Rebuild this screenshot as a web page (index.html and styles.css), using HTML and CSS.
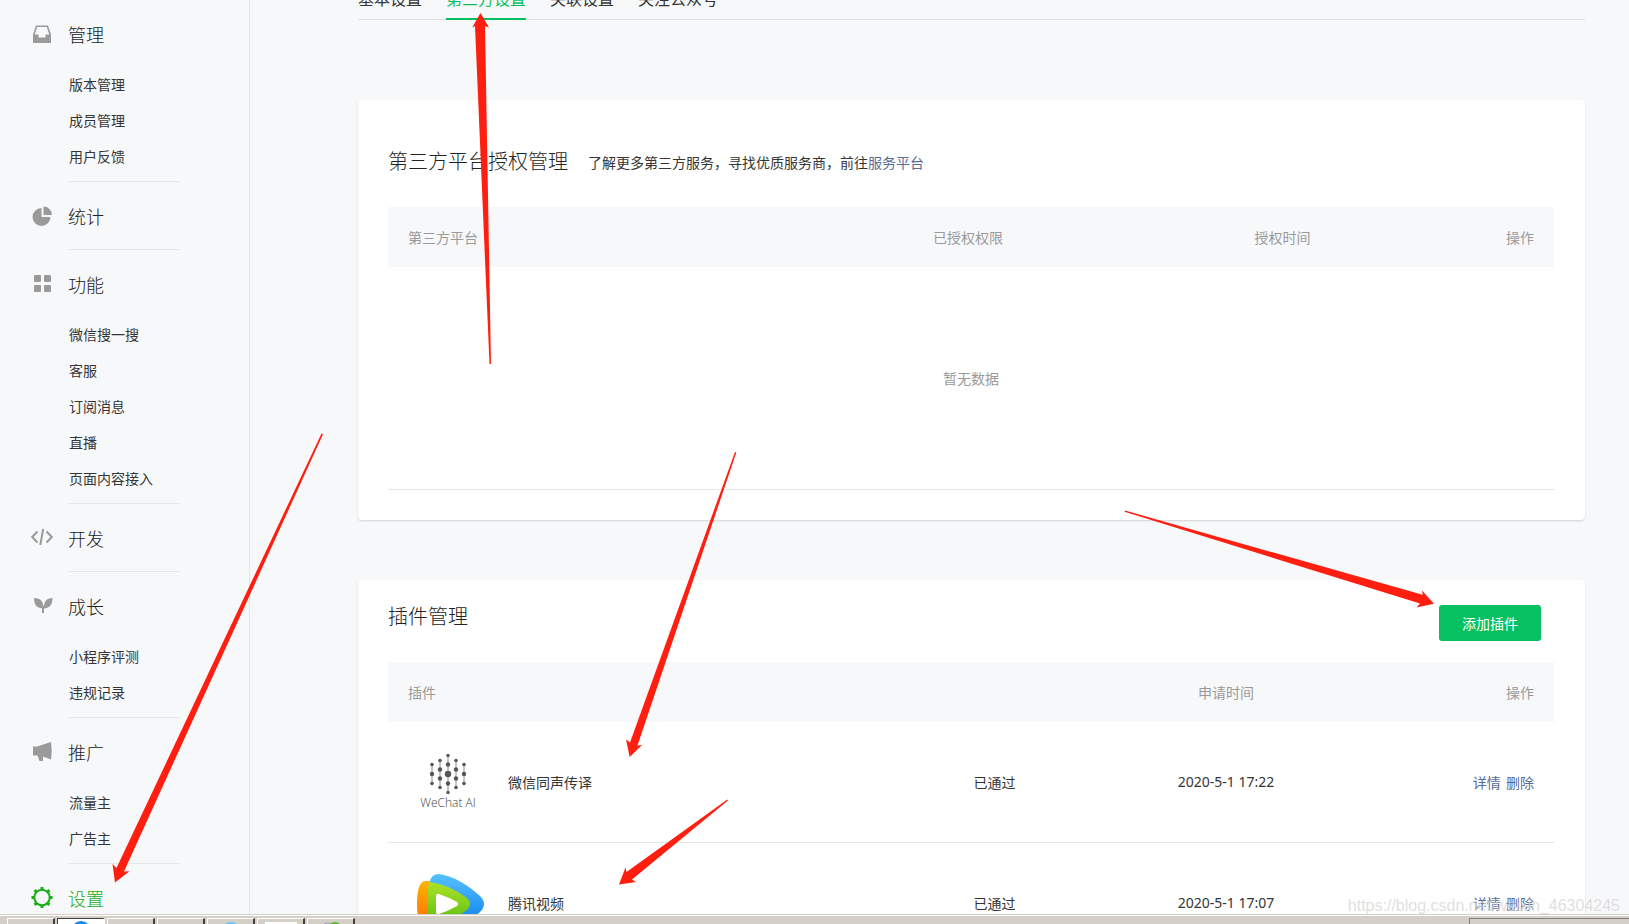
FILE: index.html
```html
<!DOCTYPE html>
<html lang="zh-CN">
<head>
<meta charset="utf-8">
<title>第三方设置</title>
<link rel="stylesheet" href="styles.css">
</head>
<body>
<div class="page">
  <nav class="sidebar">
    <section class="group">
      <h2 class="group-title"><svg class="icon" viewBox="0 0 22 22"><path fill="#9a9a9a" fill-rule="evenodd" d="M5 2.500h12l3 9V20H2v-8.500zM6.200 4 3.800 11.500H7.500v3h7v-3h3.700L15.800 4z"/></svg>管理</h2>
      <ul class="submenu">
        <li><a href="#">版本管理</a></li>
        <li><a href="#">成员管理</a></li>
        <li><a href="#">用户反馈</a></li>
      </ul>
    </section>
    <section class="group">
      <h2 class="group-title"><svg class="icon" viewBox="0 0 22 22"><path fill="#9a9a9a" d="M10.500 3v9h9A9 9 0 1 1 10.500 3z"/><path fill="#9a9a9a" d="M12.500 1.500A8.500 8.500 0 0 1 21 10h-8.500z"/></svg>统计</h2>
    </section>
    <section class="group">
      <h2 class="group-title"><svg class="icon" viewBox="0 0 22 22"><g fill="#9a9a9a"><rect x="3" y="2" width="7" height="7" rx="1"/><rect x="13" y="2" width="7" height="7" rx="1"/><rect x="3" y="12" width="7" height="7" rx="1"/><rect x="13" y="12" width="7" height="7" rx="1"/></g></svg>功能</h2>
      <ul class="submenu">
        <li><a href="#">微信搜一搜</a></li>
        <li><a href="#">客服</a></li>
        <li><a href="#">订阅消息</a></li>
        <li><a href="#">直播</a></li>
        <li><a href="#">页面内容接入</a></li>
      </ul>
    </section>
    <section class="group">
      <h2 class="group-title"><svg class="icon" viewBox="0 0 22 22"><path fill="none" stroke="#9a9a9a" stroke-width="2" d="M6.500 4.500 1.200 10l5.300 5.500M15.500 4.500l5.300 5.500-5.300 5.500M12.200 2 9.300 18"/></svg>开发</h2>
    </section>
    <section class="group">
      <h2 class="group-title"><svg class="icon" viewBox="0 0 22 22"><g fill="#9a9a9a"><path d="M3 3c7 0 9.500 4 9.500 10.500C6 13.500 3 10 3 3zM21.500 3c-6 0-9 4-8.500 10.500 6-.5 8.500-4 8.500-10.500z"/><path d="M11 11h2v7h-2z"/></g></svg>成长</h2>
      <ul class="submenu">
        <li><a href="#">小程序评测</a></li>
        <li><a href="#">违规记录</a></li>
      </ul>
    </section>
    <section class="group">
      <h2 class="group-title"><svg class="icon" viewBox="0 0 22 22"><path fill="#9a9a9a" d="M2 5.500h4L20 1q1.500 8.500 0 17.500l-8-3v4.500H8.500l-2-5.500H2z"/></svg>推广</h2>
      <ul class="submenu">
        <li><a href="#">流量主</a></li>
        <li><a href="#">广告主</a></li>
      </ul>
    </section>
    <section class="group">
      <h2 class="group-title active"><svg class="icon" viewBox="0 0 22 22"><g fill="none" stroke="#1aad19"><circle cx="11" cy="10.500" r="7.700" stroke-width="2"/><path stroke-width="3" d="M11 0v3M11 18v3M.5 10.500h3M18.500 10.500h3M3.600 3.100l2 2M16.400 15.900l2 2M3.600 17.900l2-2M16.400 5.100l2-2"/></g></svg>设置</h2>
    </section>
  </nav>

  <main class="content">
    <div class="tabs">
      <a class="tab" href="#">基本设置</a>
      <a class="tab selected" href="#">第三方设置</a>
      <a class="tab" href="#">关联设置</a>
      <a class="tab" href="#">关注公众号</a>
    </div>

    <section class="card auth">
      <header class="card-head">
        <h3>第三方平台授权管理</h3>
        <p>了解更多第三方服务，寻找优质服务商，前往<a href="#">服务平台</a></p>
      </header>
      <table>
        <colgroup><col><col class="scope"><col class="granted"><col class="act"></colgroup>
        <thead><tr><th class="left">第三方平台</th><th>已授权权限</th><th>授权时间</th><th class="right">操作</th></tr></thead>
        <tbody><tr><td class="empty" colspan="4">暂无数据</td></tr></tbody>
      </table>
    </section>

    <section class="card plugins">
      <header class="card-head">
        <h3>插件管理</h3>
        <button type="button" class="add">添加插件</button>
      </header>
      <table>
        <colgroup><col><col class="state"><col class="applied"><col class="links"></colgroup>
        <thead><tr><th class="left">插件</th><th></th><th>申请时间</th><th class="right">操作</th></tr></thead>
        <tbody>
          <tr>
            <td class="left"><div class="plugin">
              <svg class="logo" viewBox="0 0 80 80">
                <path stroke="#8a8a8a" stroke-width="1" d="M24 22v20M32 18v28M40 12v38M48 18v28M56 22v20"/>
                <g fill="#555">
                  <circle cx="24" cy="22.500" r="1.800"/><circle cx="24" cy="32" r="2.200"/><circle cx="24" cy="41.500" r="1.800"/>
                  <circle cx="32" cy="18.500" r="1.800"/><circle cx="32" cy="27.500" r="2.200"/><circle cx="32" cy="36.500" r="2.200"/><circle cx="32" cy="45.500" r="1.800"/>
                  <circle cx="40" cy="13.500" r="1.700"/><circle cx="40" cy="22.500" r="2.200"/><circle cx="40" cy="32" r="3.200"/><circle cx="40" cy="41.500" r="2.200"/><circle cx="40" cy="50.500" r="1.700"/>
                  <circle cx="48" cy="18.500" r="1.800"/><circle cx="48" cy="27.500" r="2.200"/><circle cx="48" cy="36.500" r="2.200"/><circle cx="48" cy="45.500" r="1.800"/>
                  <circle cx="56" cy="22.500" r="1.800"/><circle cx="56" cy="32" r="2.200"/><circle cx="56" cy="41.500" r="1.800"/>
                </g>
                <text class="logo-text" x="40" y="65" text-anchor="middle">WeChat AI</text>
              </svg>
              <span>微信同声传译</span></div></td>
            <td>已通过</td><td class="date">2020-5-1 17:22</td>
            <td class="right"><a href="#">详情</a> <a href="#">删除</a></td>
          </tr>
          <tr>
            <td class="left"><div class="plugin">
              <svg class="logo" viewBox="0 0 80 80">
                <defs>
                  <linearGradient id="blue" x2="0" y2="1"><stop offset="0" stop-color="#55c1ff"/><stop offset=".6" stop-color="#2492f5"/><stop offset="1" stop-color="#1c86f0"/></linearGradient>
                  <linearGradient id="orange" x2="0" y2="1"><stop offset="0" stop-color="#ffb400"/><stop offset="1" stop-color="#ff6a00"/></linearGradient>
                  <linearGradient id="green" x2="0" y2="1"><stop offset="0" stop-color="#aee226"/><stop offset="1" stop-color="#55bb10"/></linearGradient>
                </defs>
                <path fill="url(#blue)" d="M22 19q1-8 9-8 20 3 41 22 8 8 0 16-21 19-41 22-8 0-9-8z"/>
                <path fill="url(#orange)" d="M22 18h-5Q9 19 9 41t8 23h5z"/>
                <path fill="url(#green)" d="M21 19q19 2 38 16 6 6 0 12-19 14-38 16-4-22 0-44z"/>
                <path fill="#fff" d="M28 33q0-3 3-2 9 3 18 8 2 2 0 4-9 5-18 8-3 1-3-2z"/>
              </svg>
              <span>腾讯视频</span></div></td>
            <td>已通过</td><td class="date">2020-5-1 17:07</td>
            <td class="right"><a href="#">详情</a> <a href="#">删除</a></td>
          </tr>
        </tbody>
      </table>
    </section>
  </main>
</div>

<footer class="taskbar">
  <span class="task"></span>
  <span class="task pressed"><svg width="20" height="20"><circle cx="10" cy="11" r="10" fill="#1e88e5"/></svg></span>
  <span class="task"></span>
  <span class="task"><svg width="24" height="20"><path fill="#2f7fe0" d="M0 4h24v16H0z"/></svg></span>
  <span class="task"><svg width="20" height="20"><ellipse cx="10" cy="11" rx="9" ry="9" fill="#5cc8fa"/></svg></span>
  <span class="task"><svg width="32" height="20"><path fill="#fff" d="M0 2h32v18H0z"/></svg></span>
  <span class="task"><svg width="24" height="20"><ellipse cx="9" cy="10" rx="8" ry="7" fill="#eee" stroke="#999"/><ellipse cx="16" cy="8" rx="7" ry="6" fill="#5ab82e"/></svg></span>
  <span class="tray"></span>
</footer>

<div class="watermark">https://blog.csdn.net/weixin_46304245</div>
<svg class="arrows" width="1629" height="924" viewBox="0 0 1629 924" fill="#ff1f10" aria-hidden="true">
  <path d="M480.500 13 489 27.500 485 26 491 364h-1.500L475 26l-2.800 1.500z"/>
  <path d="M115 882.500 112.500 864l4 4L321.500 433.500l1.500.7L124 871.500l5.500-.3z"/>
  <path d="M629.700 757 626 739.500l4 3L735 452l1.300.5L637.500 745.500l4.500-.5z"/>
  <path d="M619 884.500 625.500 867.500l1 4.500L727.300 799.500l.7 1L632 879.500l4 2.500z"/>
  <path d="M1434 603.700 1422 590.500l.7 4.300L1125 510.500l-.4 1.200L1420 603.500l-3.500 4z"/>
</svg>
</body>
</html>
```
FILE: styles.css
```css
* { box-sizing: border-box; }
body {
  margin: 0;
  height: 100vh;
  overflow: hidden;
  display: flex;
  flex-direction: column;
  position: relative;
  background: #f7f8fa;
  color: #353535;
  font: 14px/20px "Noto Sans CJK SC", sans-serif;
}
h2, h3, p, ul { margin: 0; padding: 0; }
ul { list-style: none; }
a { color: #576b95; text-decoration: none; }

.page { flex: 1; min-height: 0; display: flex; overflow: hidden; }

.sidebar { flex: none; width: 250px; border-right: 1px solid #e4e5e7; }
.group { padding-top: 20px; margin-left: 69px; width: 110px; border-bottom: 1px solid #e4e5e7; }
.group-title {
  display: flex;
  align-items: center;
  height: 28px;
  margin: 0 0 19px -38px;
  font-size: 18px;
  font-weight: 300;
  line-height: 28px;
  color: #222;
}
.group-title.active { color: #1aad19; }
.icon { flex: none; width: 22px; height: 22px; margin-right: 15px; }
.submenu { padding-bottom: 6px; }
.submenu a { display: block; height: 36px; color: inherit; line-height: 34px; white-space: nowrap; }

.content { flex: 1; min-width: 0; padding: 0 44px 0 108px; }
.tabs {
  display: flex;
  align-items: flex-end;
  gap: 24px;
  height: 20px;
  box-shadow: inset 0 -1px #dfe0e2;
}
.tab {
  color: inherit;
  font-size: 16px;
  line-height: 24px;
  padding-bottom: 8px;
  border-bottom: 2px solid transparent;
}
.tab.selected { color: #07c160; border-color: #07c160; }

.card {
  background: #fff;
  border-radius: 4px;
  padding: 0 31px 30px 30px;
  box-shadow: 0 1px 2px rgba(0, 0, 0, .15);
}
.card-head { display: flex; align-items: center; }
.card h3 { font-size: 20px; font-weight: 300; line-height: 28px; color: #222; }
.auth { margin-top: 80px; }
.auth .card-head { height: 107px; padding-top: 16px; gap: 20px; }
.auth h3 { padding-bottom: 2px; }
.plugins { margin-top: 60px; }
.plugins .card-head { height: 82px; padding: 4px 13px 0 0; justify-content: space-between; }
.plugins h3 { padding-bottom: 14px; }
.add {
  width: 102px;
  height: 36px;
  padding: 0;
  border: 0;
  border-radius: 3px;
  background: #07c160;
  color: #fff;
  font: inherit;
}

table { width: 100%; table-layout: fixed; border-collapse: separate; border-spacing: 0; }
th { height: 60px; padding: 0; background: #f7f8fa; color: #9a9a9a; font-weight: 400; }
td { padding: 20px 0; text-align: center; border-bottom: 1px solid #e4e5e7; }
.left { padding-left: 20px; text-align: left; }
.right { padding-right: 20px; text-align: right; }
.right a + a { margin-left: 2px; }
.scope { width: 346px; }
.granted { width: 283px; }
.act { width: 130px; }
.state { width: 231px; }
.applied { width: 232px; }
.links { width: 212px; }
.empty { height: 223px; color: #9a9a9a; }
.date { font-family: "Noto Sans", sans-serif; }
.plugin { display: flex; align-items: center; gap: 20px; }
.logo { flex: none; width: 80px; height: 80px; }
.logo-text { font: 300 12px "Open Sans", sans-serif; fill: #444; }

.taskbar {
  flex: none;
  display: flex;
  gap: 2px;
  height: 10px;
  padding: 3px 0 0 7px;
  overflow: hidden;
  background: #d4d0c8;
  border-top: 1px solid #d4d0c8;
  box-shadow: inset 0 1px #fff;
}
.task {
  display: flex;
  justify-content: center;
  flex: none;
  width: 48px;
  height: 22px;
  border: 1px solid #fff;
  border-right: 2px solid #404040;
}
.task svg { margin-top: 1px; }
.task.pressed { border-color: #404040 #fff #fff #404040; background: #fff; }
.tray { width: 160px; height: 22px; margin-left: auto; border: 1px solid #808080; border-right: 0; }

.watermark {
  position: absolute;
  right: 9px;
  bottom: 8px;
  font: 16px/20px "Liberation Sans", sans-serif;
  color: rgba(215, 215, 215, .8);
}
.arrows { position: absolute; left: 0; top: 0; pointer-events: none; }
```
